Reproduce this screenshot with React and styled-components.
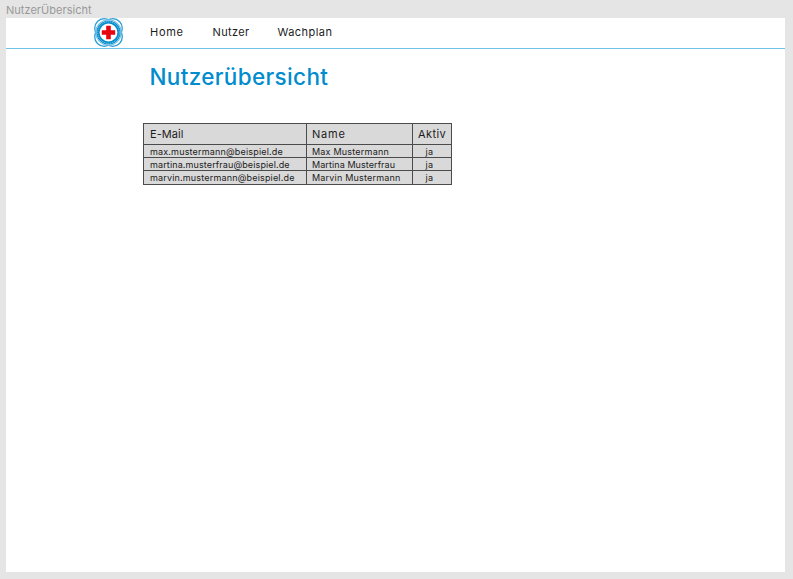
import React from 'react';
import styled, { createGlobalStyle } from 'styled-components';

const GlobalStyle = createGlobalStyle`
  * { box-sizing: border-box; }
  body {
    margin: 0;
    background: #e5e5e5;
    color: #1c1c1c;
    font-family: Inter, "Open Sans", sans-serif;
  }
`;

const Canvas = styled.div`
  display: flex;
  flex-direction: column;
  height: 579px;
  padding: 0 8px 7px 6px;
  overflow: hidden;
`;

const FrameLabel = styled.div`
  height: 18px;
  flex: none;
  padding-top: 2px;
  font-size: 11px;
  line-height: 16px;
  letter-spacing: 0.03px;
  color: #999;
`;

const Frame = styled.main`
  flex: 1;
  background: #fff;
`;

const Header = styled.header`
  display: flex;
  align-items: flex-start;
  height: 31px;
  padding-left: 88px;
  border-bottom: 1px solid #6fc4e6;
`;

const Logo = styled.svg`
  width: 29px;
  height: 29px;
  flex: none;
`;

const Nav = styled.nav`
  display: flex;
  padding: 6px 0 0 27px;
`;

const NavItem = styled.a`
  width: ${({ $width }) => $width}px;
  font-size: 11px;
  line-height: 16px;
  letter-spacing: ${({ $tracking }) => $tracking}px;
`;

const Title = styled.h1`
  margin: 14px 0 0 143.5px;
  font-size: 22.5px;
  font-weight: 500;
  line-height: 28px;
  letter-spacing: 0.34px;
  color: #008ccd;
`;

const Table = styled.div`
  display: grid;
  grid-template-columns: 162px 105px 38px;
  grid-template-rows: 20px 12px 12px 13px;
  gap: 1px;
  width: 309px;
  margin: 32px 0 0 137px;
  padding: 1px;
  background: #4b4b4b;
`;

const Cell = styled.div`
  padding-left: ${({ $indent = 6 }) => $indent}px;
  background: #d9d9d9;
  font-size: 9px;
  line-height: ${({ $line = 13 }) => $line}px;
  letter-spacing: ${({ $tracking }) => $tracking}px;
  white-space: nowrap;
`;

const HeadCell = styled(Cell)`
  font-size: 11px;
  line-height: 20px;
`;

const navItems = [
  { label: 'Home', width: 62.5, tracking: 0.72 },
  { label: 'Nutzer', width: 65, tracking: 0.36 },
  { label: 'Wachplan', width: 60, tracking: 0.44 },
];

const users = [
  { email: 'max.mustermann@beispiel.de', name: 'Max Mustermann', emailTracking: 0.17, nameTracking: 0.21, line: 14 },
  { email: 'martina.musterfrau@beispiel.de', name: 'Martina Musterfrau', emailTracking: 0.12, nameTracking: 0.08, line: 13 },
  { email: 'marvin.mustermann@beispiel.de', name: 'Marvin Mustermann', emailTracking: 0.17, nameTracking: 0.2, line: 14 },
];

function Emblem() {
  return (
    <Logo viewBox="0 0 29 29" aria-hidden="true">
      <g fill="#fff" stroke="#2b9dd5" strokeWidth="1.3">
        <circle cx="10.2" cy="10.2" r="9.5" />
        <circle cx="18.8" cy="10.2" r="9.5" />
        <circle cx="10.2" cy="18.8" r="9.5" />
        <circle cx="18.8" cy="18.8" r="9.5" />
      </g>
      <circle cx="14.5" cy="14.5" r="12.9" fill="#fff" stroke="#45a9da" strokeWidth="0.8" />
      <circle cx="14.5" cy="14.5" r="10.5" fill="none" stroke="#078dcd" strokeWidth="3.2" />
      <circle cx="14.5" cy="14.5" r="10.8" fill="none" stroke="#8ccae9" strokeWidth="0.9" strokeDasharray="1.2 0.8" />
      <path d="M12.2 7.8h4.6v4.4h4.4v4.6h-4.4v4.4h-4.6v-4.4H7.8v-4.6h4.4z" fill="#e60510" />
    </Logo>
  );
}

export default function App() {
  return (
    <Canvas>
      <GlobalStyle />
      <FrameLabel>NutzerÜbersicht</FrameLabel>
      <Frame>
        <Header>
          <Emblem />
          <Nav>
            {navItems.map((item) => (
              <NavItem key={item.label} $width={item.width} $tracking={item.tracking}>{item.label}</NavItem>
            ))}
          </Nav>
        </Header>
        <Title>Nutzerübersicht</Title>
        <Table>
          <HeadCell $tracking={0.08}>E-Mail</HeadCell>
          <HeadCell $indent={5} $tracking={0.8}>Name</HeadCell>
          <HeadCell $indent={5} $tracking={0.4}>Aktiv</HeadCell>
          {users.map((user) => (
            <React.Fragment key={user.email}>
              <Cell $line={user.line} $tracking={user.emailTracking}>{user.email}</Cell>
              <Cell $indent={5} $line={user.line} $tracking={user.nameTracking}>{user.name}</Cell>
              <Cell $indent={12.5} $line={user.line} $tracking={0.4}>ja</Cell>
            </React.Fragment>
          ))}
        </Table>
      </Frame>
    </Canvas>
  );
}
